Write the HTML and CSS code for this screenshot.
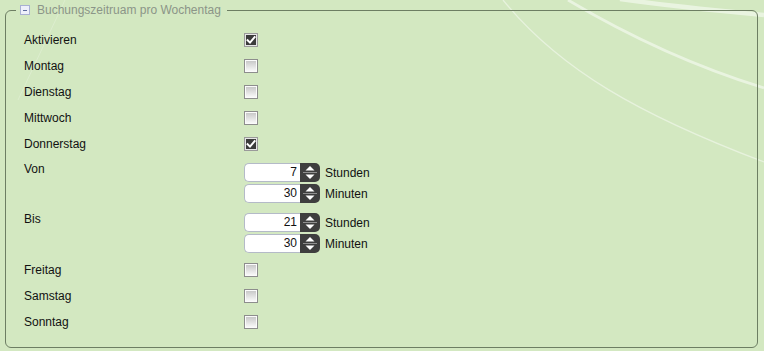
FILE: index.html
```html
<!DOCTYPE html>
<html lang="de">
<head>
<meta charset="utf-8">
<title>Buchungszeitraum</title>
<link rel="stylesheet" href="styles.css">
</head>
<body>
<svg class="decor" width="764" height="351" viewBox="0 0 764 351" aria-hidden="true">
  <path d="M65 0 L18 100" class="faint"/>
  <path d="M503 0 C 560 70, 640 115, 764 162" class="thin"/>
  <path d="M568 0 C 610 25, 680 62, 764 88" class="thick"/>
  <path d="M620 -1 C 670 6, 720 11, 764 15" class="band"/>
</svg>
<fieldset class="panel">
  <legend class="panel-title"><span class="toggle"><span class="toggle-bar"></span></span>Buchungszeitruam pro Wochentag</legend>
  <div class="rows">
    <div class="row"><span class="lbl">Aktivieren</span><span class="cb on"><svg viewBox="0 0 10 10" width="10" height="10"><polyline points="1.6,5.2 4,7.6 8.6,2.2"/></svg></span></div>
    <div class="row"><span class="lbl">Montag</span><span class="cb"></span></div>
    <div class="row"><span class="lbl">Dienstag</span><span class="cb"></span></div>
    <div class="row"><span class="lbl">Mittwoch</span><span class="cb"></span></div>
    <div class="row"><span class="lbl">Donnerstag</span><span class="cb on"><svg viewBox="0 0 10 10" width="10" height="10"><polyline points="1.6,5.2 4,7.6 8.6,2.2"/></svg></span></div>
    <div class="row row-time">
      <span class="lbl">Von</span>
      <div class="times">
        <div class="time"><span class="num">7</span><span class="spin"><svg viewBox="0 0 20 19" width="20" height="19"><path class="spin-bg" d="M0 0 H15 A5 5 0 0 1 20 5 V14 A5 5 0 0 1 15 19 H0 Z"/><line class="spin-sep" x1="3" y1="9.5" x2="17" y2="9.5"/><polygon class="arrow" points="10,3 14.5,7.5 5.5,7.5"/><polygon class="arrow" points="5.5,11.5 14.5,11.5 10,16"/></svg></span><span class="unit">Stunden</span></div>
        <div class="time"><span class="num">30</span><span class="spin"><svg viewBox="0 0 20 19" width="20" height="19"><path class="spin-bg" d="M0 0 H15 A5 5 0 0 1 20 5 V14 A5 5 0 0 1 15 19 H0 Z"/><line class="spin-sep" x1="3" y1="9.5" x2="17" y2="9.5"/><polygon class="arrow" points="10,3 14.5,7.5 5.5,7.5"/><polygon class="arrow" points="5.5,11.5 14.5,11.5 10,16"/></svg></span><span class="unit">Minuten</span></div>
      </div>
    </div>
    <div class="row row-time">
      <span class="lbl">Bis</span>
      <div class="times">
        <div class="time"><span class="num">21</span><span class="spin"><svg viewBox="0 0 20 19" width="20" height="19"><path class="spin-bg" d="M0 0 H15 A5 5 0 0 1 20 5 V14 A5 5 0 0 1 15 19 H0 Z"/><line class="spin-sep" x1="3" y1="9.5" x2="17" y2="9.5"/><polygon class="arrow" points="10,3 14.5,7.5 5.5,7.5"/><polygon class="arrow" points="5.5,11.5 14.5,11.5 10,16"/></svg></span><span class="unit">Stunden</span></div>
        <div class="time"><span class="num">30</span><span class="spin"><svg viewBox="0 0 20 19" width="20" height="19"><path class="spin-bg" d="M0 0 H15 A5 5 0 0 1 20 5 V14 A5 5 0 0 1 15 19 H0 Z"/><line class="spin-sep" x1="3" y1="9.5" x2="17" y2="9.5"/><polygon class="arrow" points="10,3 14.5,7.5 5.5,7.5"/><polygon class="arrow" points="5.5,11.5 14.5,11.5 10,16"/></svg></span><span class="unit">Minuten</span></div>
      </div>
    </div>
    <div class="row"><span class="lbl">Freitag</span><span class="cb"></span></div>
    <div class="row"><span class="lbl">Samstag</span><span class="cb"></span></div>
    <div class="row"><span class="lbl">Sonntag</span><span class="cb"></span></div>
  </div>
</fieldset>
</body>
</html>
```
FILE: styles.css
```css
html, body {
  margin: 0;
  padding: 0;
}
body {
  width: 764px;
  height: 351px;
  overflow: hidden;
  background: #d3e8c1;
  font-family: "Liberation Sans", Arial, sans-serif;
  font-size: 12px;
  color: #111;
  position: relative;
}
.decor {
  position: absolute;
  left: 0;
  top: 0;
  z-index: 0;
}
.decor path {
  fill: none;
}
.decor .faint {
  stroke: rgba(255, 255, 255, 0.22);
  stroke-width: 1;
}
.decor .thin {
  stroke: rgba(255, 255, 255, 0.45);
  stroke-width: 1.3;
}
.decor .thick {
  stroke: rgba(255, 255, 255, 0.5);
  stroke-width: 2.8;
}
.decor .band {
  stroke: rgba(255, 255, 255, 0.5);
  stroke-width: 4.5;
}
.panel {
  position: relative;
  z-index: 1;
  margin: 3px 6px 4px 5px;
  padding: 10px 10px 12px 10px;
  border: 1px solid #6d7e63;
  border-radius: 6px;
  min-width: 0;
}
.panel-title {
  padding: 0 6px 0 4px;
  line-height: 14px;
  height: 14px;
  color: #8b9588;
  white-space: nowrap;
}
.toggle {
  display: inline-block;
  vertical-align: top;
  box-sizing: border-box;
  width: 10px;
  height: 10px;
  margin-top: 2px;
  margin-right: 7px;
  border: 1px solid #a9b1d3;
  background: #eef0fb;
  position: relative;
}
.toggle-bar {
  display: block;
  width: 4px;
  height: 1px;
  margin: 3.5px auto 0;
  background: #5e6c9f;
}
.rows {
  margin-left: 8px;
  display: flex;
  flex-direction: column;
}
.row {
  display: grid;
  grid-template-columns: 220px auto;
  align-items: center;
  height: 26px;
}
.lbl {
  line-height: 14px;
}
.cb {
  box-sizing: border-box;
  width: 14px;
  height: 14px;
  border: 1px solid #8d8d8d;
  box-shadow: inset 0 0 0 1px #fbfbfb;
  background: linear-gradient(#c4c4c4, #fdfdfd);
  display: flex;
  align-items: center;
  justify-content: center;
}
.cb.on {
  border-color: #9a9a9a;
  background: #3b3b3b;
  box-shadow: inset 0 0 0 1px #e6e6e6;
}
.cb svg polyline {
  fill: none;
  stroke: #fff;
  stroke-width: 2;
  stroke-linecap: square;
  stroke-linejoin: miter;
}
.row-time {
  align-items: start;
  height: auto;
  padding: 5px 0 4px;
}
.times {
  margin-top: 1px;
  display: flex;
  flex-direction: column;
  gap: 2px;
}
.time {
  display: flex;
  align-items: center;
  height: 19px;
}
.num {
  box-sizing: border-box;
  width: 56px;
  height: 19px;
  line-height: 17px;
  border: 1px solid #b4bac8;
  border-right: none;
  border-radius: 5px 0 0 5px;
  background: #fff;
  text-align: right;
  padding-right: 3px;
  color: #111;
}
.spin {
  display: block;
  width: 20px;
  height: 19px;
}
.spin svg {
  display: block;
}
.spin-bg {
  fill: #3e3e3e;
}
.spin-sep {
  stroke: #8f8f8f;
  stroke-width: 1;
}
.arrow {
  fill: #fff;
}
.unit {
  margin-left: 5px;
  line-height: 14px;
}
```
